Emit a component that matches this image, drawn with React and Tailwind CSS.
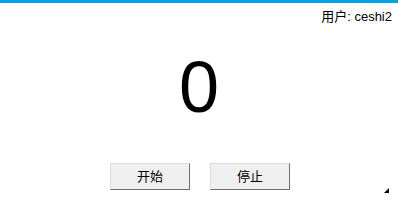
export default function App() {
  return (
    <div className="w-[398px] h-[200px] bg-white flex flex-col font-['Liberation_Sans','Noto_Sans_CJK_SC',sans-serif] text-black relative overflow-hidden">
      <div className="h-[3px] bg-[#00a2e8]" />
      <div className="flex justify-end pr-[6px] pt-[6px] text-[13px] leading-[16px]">用户: ceshi2</div>
      <div className="flex justify-center mt-[26px] text-[72px] leading-[72px]">0</div>
      <div className="flex justify-center gap-[20px] mt-[40px] pl-[2px]">
        <button className="w-[80px] h-[27px] bg-[#f0f0f0] border border-[#dcdcdc] border-b-[#707070] border-r-[#707070] text-[13px]">开始</button>
        <button className="w-[80px] h-[27px] bg-[#f0f0f0] border border-[#dcdcdc] border-b-[#707070] border-r-[#707070] text-[13px]">停止</button>
      </div>
      <svg className="absolute right-[9px] bottom-[7px]" width="5" height="5" viewBox="0 0 5 5">
        <polygon points="5,0 5,5 0,5" fill="#000" />
      </svg>
    </div>
  )
}
